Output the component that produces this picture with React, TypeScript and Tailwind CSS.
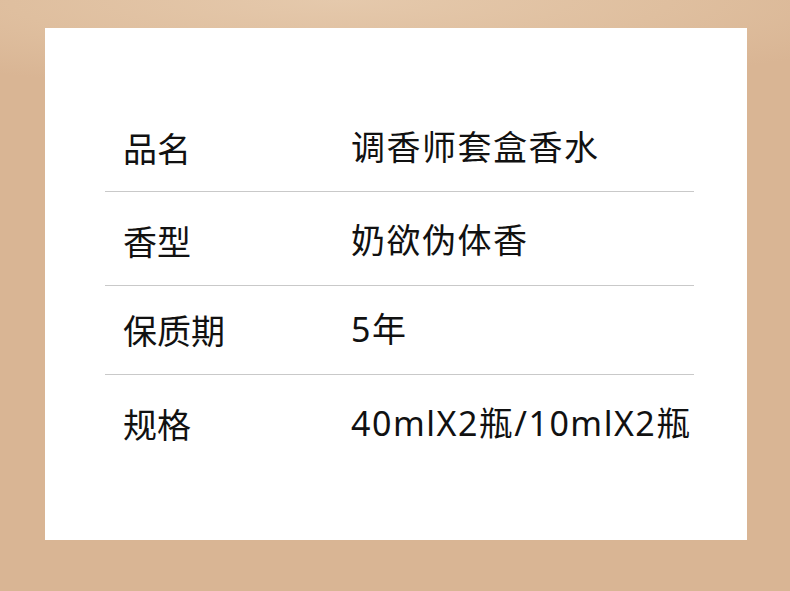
import React from "react";

const rows = [
  { label: "品名", value: "调香师套盒香水", pad: "pt-[24px] pb-[26px]", line: true },
  { label: "香型", value: "奶欲伪体香", pad: "pt-[31px] pb-[27px]", line: true },
  { label: "保质期", value: "5年", pad: "pt-[26px] pb-[27px]", line: true },
  { label: "规格", value: "40mlX2瓶/10mlX2瓶", pad: "pt-[31px] pb-[27px]", line: false },
];

export default function App() {
  return (
    <div className="w-[790px] h-[591px] overflow-hidden bg-[#d9b594] bg-[radial-gradient(ellipse_600px_90px_at_340px_0px,#e5c9ac_0%,#dfbf9f_55%,#d9b594_100%)] pt-[28px] pl-[45px]">
      <div className="w-[702px] h-[512px] bg-white pt-[78px] pl-[60px]">
        <div className="w-[589px] text-[#111111] text-[34px] leading-[35px] font-['Noto_Sans_CJK_SC','Noto_Sans',sans-serif]">
          {rows.map((r) => (
            <div
              key={r.label}
              className={`flex pl-[18px] ${r.pad} ${r.line ? "border-b border-[#c9c9c9]" : ""}`}
            >
              <div className="w-[228px] shrink-0">{r.label}</div>
              <div className="whitespace-nowrap tracking-[1.5px] font-['Noto_Sans','Noto_Sans_CJK_SC',sans-serif]">
                {r.value}
              </div>
            </div>
          ))}
        </div>
      </div>
    </div>
  );
}
